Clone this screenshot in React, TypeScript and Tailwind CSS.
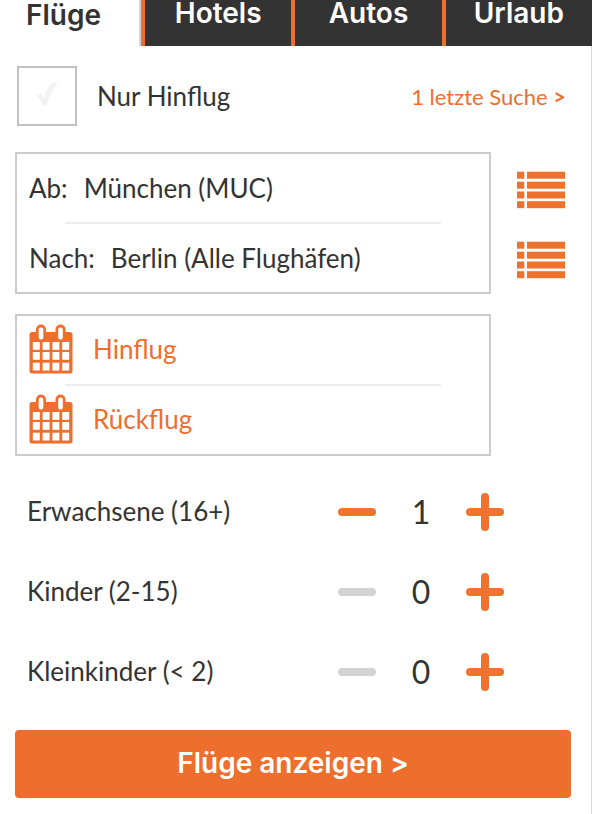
import { useState } from "react";

const tabs = ["Hotels", "Autos", "Urlaub"];

const ListIcon = () => (
  <svg viewBox="0 0 50 38" className="h-[38px] w-[50px]" fill="#ec722e" aria-hidden="true">
    {[0.7, 10.7, 20.5, 30.2].map((y) => (
      <g key={y}>
        <rect x="1" y={y} width="7.3" height="7" />
        <rect x="11" y={y} width="38" height="7" />
      </g>
    ))}
  </svg>
);

const CalendarIcon = () => (
  <svg viewBox="0 0 44 50" className="h-[50px] w-11" aria-hidden="true">
    <rect x="0.5" y="8" width="43" height="41.500" rx="2.500" fill="#ee6e2d" />
    <rect x="7" y="0.5" width="10" height="17" rx="5" fill="#ee6e2d" />
    <rect x="26.500" y="0.5" width="10" height="17" rx="5" fill="#ee6e2d" />
    <g fill="#fff">
      <rect x="9.7" y="3.5" width="4.6" height="12" rx="2" />
      <rect x="29.2" y="3.5" width="4.6" height="12" rx="2" />
      {[18, 28, 38.7].map((y) =>
        [3.8, 13.6, 23.4, 33.2].map((x) => (
          <rect key={`${x}-${y}`} x={x} y={y} width="7" height="7.8" />
        ))
      )}
    </g>
  </svg>
);

const MinusIcon = () => (
  <svg viewBox="0 0 38 38" className="h-[38px] w-[38px]" fill="currentColor" aria-hidden="true">
    <rect x="0" y="15" width="38" height="8" rx="4" />
  </svg>
);

const PlusIcon = () => (
  <svg viewBox="0 0 38 38" className="h-[38px] w-[38px]" fill="currentColor" aria-hidden="true">
    <rect x="0" y="15" width="38" height="8" rx="4" />
    <rect x="15" y="0" width="8" height="38" rx="4" />
  </svg>
);

type PlaceRowProps = {
  id: string;
  label: string;
  value: string;
};

const PlaceRow = ({ id, label, value }: PlaceRowProps) => (
  <div className="flex h-[68px] items-center gap-4 pl-3">
    <label htmlFor={id}>{label}</label>
    <input
      id={id}
      type="text"
      defaultValue={value}
      className="min-w-0 flex-1 bg-transparent outline-none"
    />
  </div>
);

const DateRow = ({ label }: { label: string }) => (
  <button
    type="button"
    className="flex h-[68px] w-full items-center gap-5 pb-[2px] pl-3 text-left text-[#ee6e2d]"
  >
    <CalendarIcon />
    {label}
  </button>
);

const Divider = () => <div className="mx-12 h-[2px] bg-[#ededed]" />;

type CounterProps = {
  label: string;
  initial: number;
  min: number;
};

const Counter = ({ label, initial, min }: CounterProps) => {
  const [count, setCount] = useState(initial);

  return (
    <div className="flex h-20 items-center justify-between pl-3 pr-[67px]">
      <span className="pb-[2px]">{label}</span>
      <div className="flex items-center">
        <button
          type="button"
          aria-label={`${label} weniger`}
          disabled={count <= min}
          onClick={() => setCount(count - 1)}
          className="text-[#f07430] disabled:text-[#d3d3d3]"
        >
          <MinusIcon />
        </button>
        <output className="w-[90px] text-center text-[32px]">{count}</output>
        <button
          type="button"
          aria-label={`${label} mehr`}
          onClick={() => setCount(count + 1)}
          className="text-[#f07430]"
        >
          <PlusIcon />
        </button>
      </div>
    </div>
  );
};

export default function App() {
  return (
    <div className="flex min-h-screen flex-col bg-white font-['Lato',sans-serif] text-[26px] leading-8 text-[#333]">
      <nav className="flex h-[46px] font-['Inter',sans-serif] text-[28px] font-semibold leading-[26px]">
        <a href="#fluege" className="w-[141px] border-r-2 border-[#d3d3d3] pl-[26px] pt-[2px]">
          Flüge
        </a>
        {tabs.map((tab) => (
          <a
            key={tab}
            href={`#${tab.toLowerCase()}`}
            className="flex-1 border-l-4 border-[#ee6e2d] bg-[#333] text-center text-white"
          >
            {tab}
          </a>
        ))}
      </nav>

      <form
        className="flex-1 border-r border-[#d8d8d8] pb-4 pl-[15px] pr-5 pt-5"
        onSubmit={(e) => e.preventDefault()}
      >
        <div className="flex items-center justify-between pl-[2px] pr-[5px]">
          <label className="flex items-center gap-5">
            <span className="relative h-[60px] w-[60px]">
              <input
                type="checkbox"
                className="peer block h-full w-full appearance-none border-2 border-[#c2c2c2]"
              />
              <svg
                viewBox="0 0 22 24"
                className="pointer-events-none absolute left-[19px] top-4 h-6 w-[22px] text-[#f2f2f2] peer-checked:text-[#ee6e2d]"
                fill="currentColor"
                aria-hidden="true"
              >
                <path d="M0.500 13c1.800-1.600 4.500-1.600 5.600.8l1.600 3.400C9.800 9.500 12.500 3.800 16 1.500c1.800-1.100 3.800-1.100 5.800-.4C17 6 13.800 13 11 22.200c-.5 1.600-3.300 1.600-4.200.2C4.800 19 3 15.500.5 13z" />
              </svg>
            </span>
            Nur Hinflug
          </label>
          <a href="#suche" className="pt-[2px] text-[22px] text-[#ee6e2d]">
            1 letzte Suche <span className="font-bold">&gt;</span>
          </a>
        </div>

        <div className="mt-[26px] flex">
          <div className="flex-1 border-2 border-[#ccc]">
            <PlaceRow id="from" label="Ab:" value="München (MUC)" />
            <Divider />
            <PlaceRow id="to" label="Nach:" value="Berlin (Alle Flughäfen)" />
          </div>
          <div className="flex w-20 flex-col items-end justify-center gap-8 pr-[5px] pt-1">
            <button type="button" aria-label="Abflughafen auswählen">
              <ListIcon />
            </button>
            <button type="button" aria-label="Zielflughafen auswählen">
              <ListIcon />
            </button>
          </div>
        </div>

        <div className="mr-20 mt-5 border-2 border-[#ccc]">
          <DateRow label="Hinflug" />
          <Divider />
          <DateRow label="Rückflug" />
        </div>

        <div className="mt-4">
          <Counter label="Erwachsene (16+)" initial={1} min={0} />
          <Counter label="Kinder (2-15)" initial={0} min={0} />
          <Counter label="Kleinkinder (< 2)" initial={0} min={0} />
        </div>

        <button
          type="submit"
          className="mt-[18px] h-[68px] w-full rounded bg-[#ee6e2d] pb-[2px] font-['Inter',sans-serif] text-[28px] font-semibold text-white"
        >
          Flüge anzeigen &gt;
        </button>
      </form>
    </div>
  );
}
